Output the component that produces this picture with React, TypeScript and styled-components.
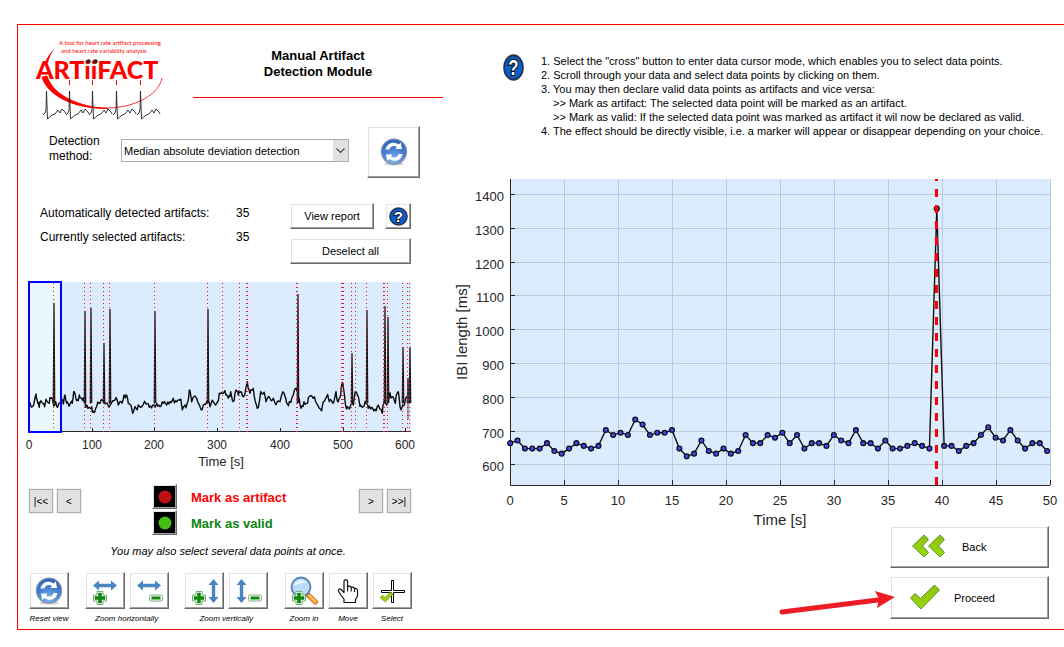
import React from "react";
import styled, { createGlobalStyle, css } from "styled-components";

const GlobalStyle = createGlobalStyle`
  *, *::before, *::after { box-sizing: border-box; }
  body {
    margin: 0;
    background: #ffffff;
    color: #000000;
    font-family: "Liberation Sans", Arial, sans-serif;
    font-size: 12px;
  }
  p { margin: 0; }
`;

const Page = styled.div`
  padding: 24px 0 16px 17px;
`;

const Frame = styled.main`
  display: grid;
  grid-template-columns: 425px minmax(0, 1fr);
  border: 1px solid #ff0000;
  border-right: 0;
  padding-bottom: 5px;
`;

const Controls = styled.section`
  display: flex;
  flex-direction: column;
`;

const Header = styled.header`
  display: flex;
  align-items: flex-start;
  justify-content: space-between;
  padding: 15px 0 0 16px;
`;

const Logo = styled.svg`
  display: block;
  width: 132px;
  height: 84px;
  font-family: Lato, sans-serif;
`;

const Title = styled.h1`
  width: 250px;
  height: 58px;
  margin: 0;
  padding: 8px 60px 0;
  border-bottom: 1px solid #ff0000;
  font-size: 13px;
  line-height: 16px;
  text-align: center;
`;

const Body = styled.div`
  padding: 0 31px 0 10px;
`;

const bevel = css`
  border-style: solid;
  border-width: 1px;
  border-color: #ffffff #696969 #696969 #ffffff;
  box-shadow: inset -1px -1px 0 #a0a0a0, inset 1px 1px 0 #e3e3e3;
`;

const BevelButton = styled.button<{ $w: number; $h: number; $dark?: boolean }>`
  ${bevel}
  display: flex;
  flex-shrink: 0;
  align-items: center;
  justify-content: center;
  width: ${(p) => p.$w}px;
  height: ${(p) => p.$h}px;
  padding: 0;
  background: ${(p) => (p.$dark ? "#000000" : "#ffffff")};
  color: #000000;
  font-family: inherit;
  font-size: 11px;
  cursor: pointer;
`;

const MethodRow = styled.div`
  display: flex;
  align-items: flex-start;
  margin-top: 2px;
  padding-left: 31px;
`;

const MethodLabel = styled.label`
  width: 72px;
  padding-top: 8px;
  line-height: 15px;
`;

const SelectBox = styled.div`
  position: relative;
  width: 228px;
  margin: 13px 18px 0 0;
`;

const MethodSelect = styled.select`
  appearance: none;
  display: block;
  width: 100%;
  height: 23px;
  padding: 0 18px 0 2px;
  border: 1px solid #adadad;
  border-radius: 0;
  background: #ffffff;
  color: #000000;
  font-family: inherit;
  font-size: 11px;
`;

const SelectArrow = styled.svg`
  position: absolute;
  top: 1px;
  right: 1px;
  width: 15px;
  height: 21px;
  background: #e1e1e1;
  pointer-events: none;
`;

const Summary = styled.div`
  display: flex;
  justify-content: space-between;
  margin-top: 22px;
  padding: 0 1px 0 12px;
`;

const Counts = styled.dl`
  display: grid;
  grid-template-columns: 196px auto;
  align-content: start;
  margin: 0;
  padding-top: 1px;
  line-height: 24px;
  dd { margin: 0; }
`;

const ReportActions = styled.div`
  display: flex;
  flex-direction: column;
  gap: 9px;
  padding-top: 3px;
`;

const Spread = styled.div`
  display: flex;
  justify-content: space-between;
`;

const Chart = styled.svg<{ $top: number }>`
  display: block;
  width: 100%;
  height: auto;
  margin-top: ${(p) => p.$top}px;
  overflow: visible;
  fill: #262626;
  font-family: "Liberation Sans", Arial, sans-serif;
`;

const MarkRow = styled.div`
  display: flex;
  justify-content: space-between;
  align-items: flex-start;
  margin-top: 13px;
`;

const NavPair = styled.div`
  display: flex;
  gap: 2px;
  padding-top: 4px;
`;

const NavButton = styled.button`
  width: 26px;
  height: 26px;
  padding: 0;
  border: 1px solid #f0f0f0;
  background: #e1e1e1;
  box-shadow: inset 0 0 0 1px #adadad;
  color: #000000;
  font-family: inherit;
  font-size: 10px;
  cursor: pointer;
`;

const MarkList = styled.div`
  display: flex;
  flex-direction: column;
  gap: 1px;
  width: 136px;
`;

const MarkItem = styled.div<{ $color: string }>`
  display: flex;
  align-items: center;
  gap: 14px;
  color: ${(p) => p.$color};
  font-size: 13px;
  font-weight: bold;
  line-height: 15px;
  white-space: nowrap;
  span { padding-top: 2px; }
`;

const Note = styled.p`
  margin-top: 9px;
  padding-left: 16px;
  font-size: 11px;
  font-style: italic;
  line-height: 14px;
  text-align: center;
`;

const Toolbar = styled.div`
  display: flex;
  justify-content: space-between;
  margin-top: 14px;
  padding-left: 1px;
`;

const ToolGroup = styled.div`
  display: flex;
  gap: 4px;
`;

const Tool = styled.div`
  display: flex;
  flex-direction: column;
  align-items: center;
  gap: 5px;
  font-size: 8px;
  font-style: italic;
  line-height: 10px;
  white-space: nowrap;
`;

const Work = styled.section`
  display: flex;
  flex-direction: column;
`;

const Instructions = styled.div`
  display: flex;
  gap: 17px;
  padding: 29px 0 0 60px;
  font-size: 11px;
  line-height: 14px;
  white-space: nowrap;
`;

const Step = styled.p<{ $nested?: boolean }>`
  padding-left: ${(p) => (p.$nested ? 12 : 0)}px;
`;

const WizardActions = styled.div`
  position: relative;
  display: flex;
  flex-direction: column;
  align-items: flex-end;
  align-self: stretch;
  gap: 8px;
  padding-right: 15px;
`;

const WizardButton = styled(BevelButton)`
  justify-content: flex-start;
  gap: 13px;
  padding-left: 18px;
`;

const Pointer = styled.svg`
  position: absolute;
  right: 168px;
  bottom: 1px;
  width: 118px;
  height: 30px;
  pointer-events: none;
`;

/* ---------- icons ---------- */

const RefreshIcon = ({ id }: { id: string }) => (
  <svg width="28" height="28" viewBox="0 0 28 28" aria-hidden="true">
    <defs>
      <radialGradient id={id} cx="0.5" cy="0.85" r="0.9">
        <stop offset="0" stopColor="#7fb4ee" />
        <stop offset="0.6" stopColor="#3f78cc" />
        <stop offset="1" stopColor="#2b5fb4" />
      </radialGradient>
    </defs>
    <ellipse cx="14" cy="26" rx="10" ry="1.6" fill="#d4d4d4" />
    <circle cx="14" cy="13.6" r="12.6" fill={`url(#${id})`} stroke="#8794ad" strokeWidth="1.2" />
    <path d="M5.500 11.500 C7 4.500 14 3 18.500 6.500 L20.800 4.500 L22 11 L15.500 11 L17 8.800 C13.500 7 10 8.500 9.500 11.500 Z" fill="#ffffff" />
    <path d="M22.500 16 C21 23 14 24.500 9.500 21 L7.200 23 L6 16.500 L12.500 16.500 L11 18.700 C14.500 20.500 18 19 18.500 16 Z" fill="#ffffff" />
  </svg>
);

const HelpIcon = ({ w, h }: { w: number; h: number }) => (
  <svg width={w} height={h} viewBox="0 0 20 20" preserveAspectRatio="none" aria-hidden="true">
    <circle cx="10" cy="10" r="9" fill="#0a5fd0" stroke="#22344e" strokeWidth="1.600" />
    <text x="10" y="15.500" textAnchor="middle" fontSize="16" fontWeight="bold" fontFamily="Liberation Sans, sans-serif" fill="#ffffff" stroke="#101820" strokeWidth="2" paintOrder="stroke">?</text>
  </svg>
);

const Dot = ({ color }: { color: string }) => (
  <svg width="14" height="14" viewBox="0 0 14 14" aria-hidden="true">
    <circle cx="7" cy="7" r="6.500" fill={color} />
  </svg>
);

const Plus = ({ x, y }: { x: number; y: number }) => (
  <g transform={`translate(${x} ${y})`}>
    <path d="M-3 -6.500 H3 V-3 H6.500 V3 H3 V6.500 H-3 V3 H-6.500 V-3 H-3 Z" fill="#ffffff" stroke="#6fae6f" strokeWidth="1" />
    <path d="M-1.500 -5 H1.500 V-1.500 H5 V1.500 H1.500 V5 H-1.500 V1.500 H-5 V-1.500 H-1.500 Z" fill="#0c8a0c" stroke="#0a7a0a" strokeWidth="0.500" />
  </g>
);

const Minus = ({ x, y }: { x: number; y: number }) => (
  <g transform={`translate(${x} ${y})`}>
    <rect x="-6.500" y="-3" width="13" height="6" rx="1.500" fill="#ffffff" stroke="#7fae7f" />
    <rect x="-4.500" y="-1.500" width="9" height="3" fill="#0c8a0c" />
  </g>
);

const arrowH = "M0 5.500 L6 0.500 V3.800 H18 V0.500 L24 5.500 L18 10.500 V7.200 H6 V10.500 Z";

const ZoomAxisIcon = ({ vertical, plus }: { vertical?: boolean; plus?: boolean }) => (
  <svg width="36" height="32" viewBox="0 0 36 32" aria-hidden="true">
    {vertical ? (
      <path d={arrowH} fill="#4a84c2" transform={plus ? "translate(33 4) rotate(90)" : "translate(17 4) rotate(90)"} />
    ) : (
      <path d={arrowH} fill="#4a84c2" transform="translate(6 5)" />
    )}
    {plus ? <Plus x={13} y={23} /> : <Minus x={25} y={23} />}
  </svg>
);

const MagnifierIcon = () => (
  <svg width="36" height="32" viewBox="0 0 36 32" aria-hidden="true">
    <path d="M20 18 L29.500 27" stroke="#a8481e" strokeWidth="5" strokeLinecap="round" />
    <path d="M23 20.800 L29.500 27" stroke="#ff9b2e" strokeWidth="4" strokeLinecap="round" />
    <path d="M23 20.500 L29 26" stroke="#ffd27a" strokeWidth="1.200" strokeLinecap="round" />
    <circle cx="15" cy="12" r="9.500" fill="#b9dcfa" stroke="#5f7fb5" strokeWidth="1.800" />
    <path d="M8 11 C9 5 17 3 21 8 C17 7 12 9 8 11 Z" fill="#eaf6ff" />
    <Plus x={13} y={23} />
  </svg>
);

const HandIcon = () => (
  <svg width="36" height="32" viewBox="0 0 36 32" aria-hidden="true">
    <path
      d="M14 27.500 V24 L10.500 19.500 L8.500 16 C8 14.500 9.500 13.300 11 14.500 L14 17.500 V6.500 C14 4 17.600 4 17.600 6.500 V12 C18.500 10.500 21 11 21.200 12.800 C22 11.500 24.200 12 24.500 13.800 C25.500 12.800 27.500 13.500 27.500 15.500 V21 L25.500 24.500 V27.500 Z"
      fill="#ffffff" stroke="#111111" strokeWidth="1.200" strokeLinejoin="round"
    />
    <path d="M17.600 12 V16.500 M21.200 12.800 V16.500 M24.500 13.800 V17" stroke="#111111" strokeWidth="1.100" />
  </svg>
);

const CrossIcon = () => (
  <svg width="36" height="32" viewBox="0 0 36 32" aria-hidden="true">
    <path d="M17.500 5.500 H19.500 V15.500 H30.500 V17.500 H19.500 V27.500 H17.500 V17.500 H7.500 V15.500 H17.500 Z" fill="#ffffff" stroke="#000000" strokeWidth="1" />
    <path d="M6 22.500 L8.500 20.200 L11 22.500 L16.500 17 L19 19.300 L11.200 27 Z" fill="#9acd12" stroke="#7aa80a" strokeWidth="0.700" />
  </svg>
);

const GreenGradient = ({ id }: { id: string }) => (
  <defs>
    <linearGradient id={id} x1="0" y1="0" x2="0" y2="1">
      <stop offset="0" stopColor="#8fbf0c" />
      <stop offset="1" stopColor="#9ed80a" />
    </linearGradient>
  </defs>
);

const BackIcon = () => (
  <svg width="40" height="32" viewBox="0 0 40 32" aria-hidden="true">
    <GreenGradient id="backGreen" />
    <g fill="url(#backGreen)" stroke="#4f9a2c" strokeWidth="1" strokeLinejoin="round">
      <path d="M3.500 15 L15 4 L19.500 8.500 L13.500 15 L19.500 21.500 L15 26 Z" />
      <path d="M19.500 15 L31 4 L35.500 8.500 L29.500 15 L35.500 21.500 L31 26 Z" />
    </g>
  </svg>
);

const CheckIcon = () => (
  <svg width="32" height="32" viewBox="0 0 32 32" aria-hidden="true">
    <GreenGradient id="checkGreen" />
    <path d="M1.500 16 L6 11.500 L11.500 16.500 L25.500 3 L30.500 8 L12 27 Z" fill="url(#checkGreen)" stroke="#4f9a2c" strokeLinejoin="round" />
  </svg>
);

const beats = [12, 35, 58, 82, 106];

const BrandLogo = () => (
  <Logo viewBox="0 0 132 84" role="img" aria-label="ARTiiFACT">
    <g fontSize="6" fill="#ff0000">
      <text x="25" y="5">A tool for heart rate artifact processing</text>
      <text x="27" y="13">and heart rate variability analysis</text>
    </g>
    <path d="M20.500 9 C16 13 13 17 11 23 L14 23 C15 18 17 13 20.500 9 Z" fill="#ff0000" />
    <text x="2" y="39" fontSize="25" fontWeight="900" fill="#ff0000">ARTiiFACT</text>
    <circle cx="54.500" cy="21.500" r="2.200" fill="#3a2020" />
    <circle cx="61.500" cy="21.500" r="2.200" fill="#3a2020" />
    <path d="M8 37 C14 56 40 68 72 68 C102 68 125 54 128 38" fill="none" stroke="#ff0000" strokeWidth="0.800" />
    <path d="M8 37 C14 56 40 69 74 68.500 C44 67 19 55 13 36 Z" fill="#ff0000" stroke="#ff0000" strokeWidth="0.800" />
    {beats.map((x, i) => (
      <g key={x} fill="none">
        {i > 0 && <path d={`M${x + 0.5} 40 V45`} stroke="#ff0000" strokeWidth="1" />}
        <path
          d={`M${x - 3} 75 L${x - 1} 73 L${x} 70 L${x + 0.5} 51 L${x + 1.5} 79 L${x + 6} 75 L${x + 9} 74 L${x + 12} 70 L${x + 14} 73 L${x + 16} 69 L${x + 19} 72 L${x + 20} 74`}
          stroke="#222222" strokeWidth="0.900"
        />
      </g>
    ))}
  </Logo>
);

/* ---------- overview chart ---------- */

// Trace samples as [x, y] on a grid three times finer than the plot.
const traceLeft: number[][] = [
  [27,395],[37,410],[48,372],[53,400],[58,412],[63,392],[72,402],[78,388],[88,400],[93,385],[100,401],[107,395],[115,405],[122,398],[130,402],[135,375],[142,395],[150,402],[157,400],[163,365],[170,392],[178,375],[185,385],[192,395],[197,412],[207,412],[215,410],[222,428],[230,410],[240,400],[252,390],[262,400],[275,398],[285,390],[295,405],[303,395],[312,375],[318,375],[325,400],[338,430],[345,410],[355,405],[365,410],[378,402],[388,412],[398,405],[410,400],[420,410],[430,400],[440,405],[450,395],[460,385],[470,395],[480,390],[487,420],[495,405],[503,395],[508,360],[515,395],[530,385],[540,410],[550,405],[560,395],[570,410],[580,395],[590,400],[598,370],
];
const traceRight: number[][] = [
  [8,370],[18,375],[25,385],[32,365],[40,395],[48,360],[55,375],[62,365],[70,380],[82,335],[90,370],[98,360],[103,380],[112,415],[122,365],[130,370],[138,395],[150,385],[160,385],[172,395],[180,395],[192,370],[200,400],[208,395],[215,385],[228,355],[235,380],[243,415],[252,395],[260,400],[268,380],[280,385],[290,400],[302,418],[310,395],[320,380],[328,395],[338,400],[348,365],[355,395],[362,375],[368,338],[376,400],[382,410],[392,405],[400,405],[408,365],[415,380],[422,405],[430,410],[438,400],[445,415],[455,412],[465,418],[475,405],[487,430],[492,395],[500,405],[510,368],[518,380],[526,400],[535,365],[540,410],[548,405],[556,390],[565,385],[572,380],
];
const trace = [...traceLeft, ...traceRight.map(([x, y]) => [x + 600, y])].map(([x, y]) => [x / 3 - 8, y / 3 - 11]);

const jitter = (i: number) => Math.sin(i * 12.9898) * 2.8 + Math.sin(i * 4.7) * 1.6;

const tracePath = (() => {
  const out: string[] = [];
  let n = 0;
  for (let i = 0; i < trace.length - 1; i++) {
    const [x0, y0] = trace[i];
    const [x1, y1] = trace[i + 1];
    const steps = 3;
    for (let s = 0; s < steps; s++) {
      const t = s / steps;
      const wobble = s === 0 ? 0 : jitter(n);
      out.push(`${(x0 + (x1 - x0) * t).toFixed(1)} ${(y0 + (y1 - y0) * t + wobble).toFixed(1)}`);
      n++;
    }
  }
  return "M" + out.join(" L");
})();

const spikes: number[][] = [
  [26, 22], [57, 30], [63, 27], [76, 62], [82, 28], [127, 30], [180, 28], [270, 13], [324, 72], [339, 29], [357, 25], [360, 36], [375, 66], [380, 97], [382, 66],
];
const artifacts = [26, 57, 63, 76, 82, 127, 180, 195, 212, 219, 220, 269, 270, 314, 315, 316, 324, 328, 339, 356, 357, 360, 375, 380, 382];

const Overview = () => (
  <Chart $top={17} viewBox="0 0 384 190" role="img" aria-label="Overview of the recording">
    <rect x="1" y="1" width="382" height="150" fill="#dbecff" />
    <rect x="2" y="1" width="31" height="149" fill="#e9f7ff" />
    <path d="M33 150.500 H383" stroke="#262626" />
    {[1, 2, 3, 4, 5, 6].map((i) => (
      <path key={i} d={`M${Math.round(1 + i * 62.7)}.5 151 V147`} stroke="#262626" />
    ))}
    <path d={tracePath} fill="none" stroke="#0b0b0b" strokeWidth="1.400" strokeLinejoin="round" />
    {spikes.map(([x, y]) => (
      <path key={x} d={`M${x - 0.7} 122 L${x} ${y} L${x + 0.7} 122`} fill="none" stroke="#1a1a1a" strokeWidth="1.300" />
    ))}
    <path d="M380 97 V138" stroke="#555555" />
    {artifacts.map((x, i) => (
      <path key={i} d={`M${x - 0.5} 2 V151`} stroke="#f01828" strokeDasharray="1 3" />
    ))}
    <rect x="1" y="1" width="32" height="150" fill="none" stroke="#0000ff" strokeWidth="2" />
    {[0, 100, 200, 300, 400, 500, 600].map((v) => (
      <text key={v} x={Math.round(1 + v * 0.627)} y="168" textAnchor="middle" fontSize="12">{v}</text>
    ))}
    <text x="193" y="185" textAnchor="middle" fontSize="13">Time [s]</text>
  </Chart>
);

/* ---------- detail chart ---------- */

const intervals = [
  664, 672, 648, 648, 648, 664, 641, 633, 648, 664, 656, 648, 656, 703, 688, 695, 688, 734, 719, 688, 695, 695, 703, 648, 625,
  633, 672, 641, 633, 648, 633, 641, 688, 664, 664, 688, 680, 695, 664, 688, 648, 664, 664, 656, 688, 672, 664, 703, 664, 664,
  648, 672, 648, 648, 656, 664, 656, 648, 1358, 656, 656, 641, 656, 664, 688, 711, 680, 672, 703, 672, 648, 664, 664, 641,
];
const px = (i: number) => 67.2 + i * 7.355;
const py = (ms: number) => 294.8 - (ms - 600) * 0.3379;
const spikeIndex = intervals.indexOf(1358);

const Detail = () => (
  <Chart $top={32} viewBox="0 0 621 356" role="img" aria-label="Inter-beat intervals over time">
    <rect x="67" y="9" width="540" height="306" fill="#dbecff" />
    {[600, 700, 800, 900, 1000, 1100, 1200, 1300, 1400].map((v) => {
      const y = Math.floor(py(v)) + 0.5;
      return (
        <g key={v}>
          <path d={`M67 ${y} H607`} stroke="#bccadb" />
          <path d={`M67 ${y} H72`} stroke="#262626" />
          <text x="61" y={y + 6} textAnchor="end" fontSize="13">{v}</text>
        </g>
      );
    })}
    {[0, 5, 10, 15, 20, 25, 30, 35, 40, 45, 50].map((v) => {
      const x = 67.5 + v * 10.8;
      return (
        <g key={v}>
          <path d={`M${Math.floor(x) + 0.5} 9 V315`} stroke="#bccadb" />
          <path d={`M${Math.floor(x) + 0.5} 310 V315`} stroke="#262626" />
          <text x={x - 0.5} y="335" textAnchor="middle" fontSize="13">{v}</text>
        </g>
      );
    })}
    <path d="M67.500 9 V315.500 H607" fill="none" stroke="#262626" />
    <polyline points={intervals.map((ms, i) => `${px(i)},${py(ms)}`).join(" ")} fill="none" stroke="#111111" strokeWidth="1.400" />
    {intervals.map((ms, i) => (
      <circle key={i} cx={px(i)} cy={py(ms)} r="2.400" fill={i === spikeIndex ? "#c01818" : "#4646f0"} stroke="#10101c" strokeWidth="1.300" />
    ))}
    <path d="M493.500 315 V9" stroke="#ff0000" strokeWidth="3" strokeDasharray="8 8" />
    <text x="337" y="355" textAnchor="middle" fontSize="15">Time [s]</text>
    <text transform="translate(24 162) rotate(-90)" textAnchor="middle" fontSize="15">IBI length [ms]</text>
  </Chart>
);

export default function App() {
  return (
    <>
      <GlobalStyle />
      <Page>
        <Frame>
          <Controls>
            <Header>
              <BrandLogo />
              <Title>Manual Artifact Detection Module</Title>
            </Header>
            <MethodRow>
              <MethodLabel htmlFor="method">Detection<br />method:</MethodLabel>
              <SelectBox>
                <MethodSelect id="method" defaultValue="mad">
                  <option value="mad">Median absolute deviation detection</option>
                </MethodSelect>
                <SelectArrow viewBox="0 0 15 21" aria-hidden="true">
                  <path d="M3.500 8.500 L7.500 12.500 L11.500 8.500" fill="none" stroke="#444444" strokeWidth="1.200" />
                </SelectArrow>
              </SelectBox>
              <BevelButton $w={53} $h={52} aria-label="Run detection"><RefreshIcon id="runBlue" /></BevelButton>
            </MethodRow>
            <Body>
              <Summary>
                <Counts>
                  <dt>Automatically detected artifacts:</dt><dd>35</dd>
                  <dt>Currently selected artifacts:</dt><dd>35</dd>
                </Counts>
                <ReportActions>
                  <Spread>
                    <BevelButton $w={84} $h={26}>View report</BevelButton>
                    <BevelButton $w={26} $h={26} aria-label="Help"><HelpIcon w={19} h={19} /></BevelButton>
                  </Spread>
                  <BevelButton $w={121} $h={26}>Deselect all</BevelButton>
                </ReportActions>
              </Summary>
              <Overview />
              <MarkRow>
                <NavPair>
                  <NavButton aria-label="First">|&lt;&lt;</NavButton>
                  <NavButton aria-label="Previous">&lt;</NavButton>
                </NavPair>
                <MarkList>
                  <MarkItem $color="#ff0000">
                    <BevelButton $w={25} $h={25} $dark aria-label="Mark as artifact"><Dot color="#c01010" /></BevelButton>
                    <span>Mark as artifact</span>
                  </MarkItem>
                  <MarkItem $color="#0c8410">
                    <BevelButton $w={25} $h={25} $dark aria-label="Mark as valid"><Dot color="#44c014" /></BevelButton>
                    <span>Mark as valid</span>
                  </MarkItem>
                </MarkList>
                <NavPair>
                  <NavButton aria-label="Next">&gt;</NavButton>
                  <NavButton aria-label="Last">&gt;&gt;|</NavButton>
                </NavPair>
              </MarkRow>
              <Note>You may also select several data points at once.</Note>
              <Toolbar>
                <Tool>
                  <BevelButton $w={40} $h={37} aria-label="Reset view"><RefreshIcon id="resetBlue" /></BevelButton>
                  Reset view
                </Tool>
                <Tool>
                  <ToolGroup>
                    <BevelButton $w={40} $h={37} aria-label="Zoom in horizontally"><ZoomAxisIcon plus /></BevelButton>
                    <BevelButton $w={40} $h={37} aria-label="Zoom out horizontally"><ZoomAxisIcon /></BevelButton>
                  </ToolGroup>
                  Zoom horizontally
                </Tool>
                <Tool>
                  <ToolGroup>
                    <BevelButton $w={40} $h={37} aria-label="Zoom in vertically"><ZoomAxisIcon vertical plus /></BevelButton>
                    <BevelButton $w={40} $h={37} aria-label="Zoom out vertically"><ZoomAxisIcon vertical /></BevelButton>
                  </ToolGroup>
                  Zoom vertically
                </Tool>
                <ToolGroup>
                  <Tool>
                    <BevelButton $w={40} $h={37} aria-label="Zoom in"><MagnifierIcon /></BevelButton>
                    Zoom in
                  </Tool>
                  <Tool>
                    <BevelButton $w={40} $h={37} aria-label="Move"><HandIcon /></BevelButton>
                    Move
                  </Tool>
                  <Tool>
                    <BevelButton $w={40} $h={37} aria-label="Select"><CrossIcon /></BevelButton>
                    Select
                  </Tool>
                </ToolGroup>
              </Toolbar>
            </Body>
          </Controls>
          <Work>
            <Instructions>
              <HelpIcon w={21} h={27} />
              <div>
                <Step>1. Select the "cross" button to enter data cursor mode, which enables you to select data points.</Step>
                <Step>2. Scroll through your data and select data points by clicking on them.</Step>
                <Step>3. You may then declare valid data points as artifacts and vice versa:</Step>
                <Step $nested>&gt;&gt; Mark as artifact: The selected data point will be marked as an artifact.</Step>
                <Step $nested>&gt;&gt; Mark as valid: If the selected data point was marked as artifact it wil now be declared as valid.</Step>
                <Step>4. The effect should be directly visible, i.e. a marker will appear or disappear depending on your choice.</Step>
              </div>
            </Instructions>
            <Detail />
            <WizardActions>
              <WizardButton $w={159} $h={42}><BackIcon />Back</WizardButton>
              <WizardButton $w={159} $h={43}><CheckIcon />Proceed</WizardButton>
              <Pointer viewBox="0 0 118 30" aria-hidden="true">
                <path d="M4 24 L100 12" stroke="#ee1c25" strokeWidth="5" strokeLinecap="round" />
                <path d="M117 9 L97 3 L101 11 L99 20 Z" fill="#ee1c25" />
              </Pointer>
            </WizardActions>
          </Work>
        </Frame>
      </Page>
    </>
  );
}
